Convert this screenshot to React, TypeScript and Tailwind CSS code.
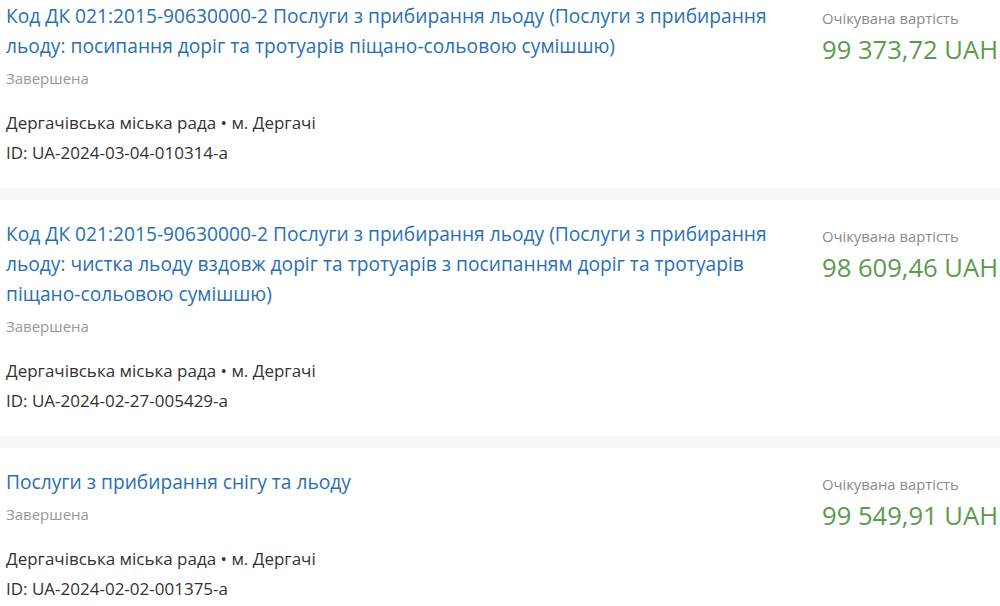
import React from 'react'

type Tender = {
  title: string
  status: string
  buyer: string
  city: string
  id: string
  amount: string
}

const tenders: Tender[] = [
  {
    title: 'Код ДК 021:2015-90630000-2 Послуги з прибирання льоду (Послуги з прибирання льоду: посипання доріг та тротуарів піщано-сольовою сумішшю)',
    status: 'Завершена',
    buyer: 'Дергачівська міська рада',
    city: 'м. Дергачі',
    id: 'UA-2024-03-04-010314-a',
    amount: '99 373,72 UAH',
  },
  {
    title: 'Код ДК 021:2015-90630000-2 Послуги з прибирання льоду (Послуги з прибирання льоду: чистка льоду вздовж доріг та тротуарів з посипанням доріг та тротуарів піщано-сольовою сумішшю)',
    status: 'Завершена',
    buyer: 'Дергачівська міська рада',
    city: 'м. Дергачі',
    id: 'UA-2024-02-27-005429-a',
    amount: '98 609,46 UAH',
  },
  {
    title: 'Послуги з прибирання снігу та льоду',
    status: 'Завершена',
    buyer: 'Дергачівська міська рада',
    city: 'м. Дергачі',
    id: 'UA-2024-02-02-001375-a',
    amount: '99 549,91 UAH',
  },
]

function TenderCard({ title, status, buyer, city, id, amount }: Tender) {
  return (
    <div className="flex flex-row bg-white pt-[19px] pb-5">
      <div className="flex-1 flex flex-col pl-[6px] pr-[30px]">
        <a href="#" className="text-[19.2px] leading-[30px] text-[#2a6fb5]">{title}</a>
        <span className="mt-[7px] text-[15px] leading-[20px] text-[#999999]">{status}</span>
        <span className="mt-[20px] text-[17px] leading-[30px] text-[#333333]">{`${buyer} • ${city}`}</span>
        <span className="text-[17px] leading-[30px] text-[#333333]">ID: {id}</span>
      </div>
      <div className="w-[178px] shrink-0 flex flex-col pt-[7px]">
        <span className="text-[14.8px] leading-[20px] text-[#8a8a8a]">Очікувана вартість</span>
        <span className="mt-[2px] text-[25.6px] leading-[40px] text-[#5a9b4e] whitespace-nowrap">{amount}</span>
      </div>
    </div>
  )
}

export default function App() {
  return (
    <div className="w-[1000px] h-[606px] overflow-hidden bg-white font-['Open_Sans',sans-serif]">
      <div className="mt-[-18px] flex flex-col gap-[12px] bg-[#f7f7f7]">
        {tenders.map((t, index) => <TenderCard key={index} {...t} />)}
      </div>
    </div>
  )
}
